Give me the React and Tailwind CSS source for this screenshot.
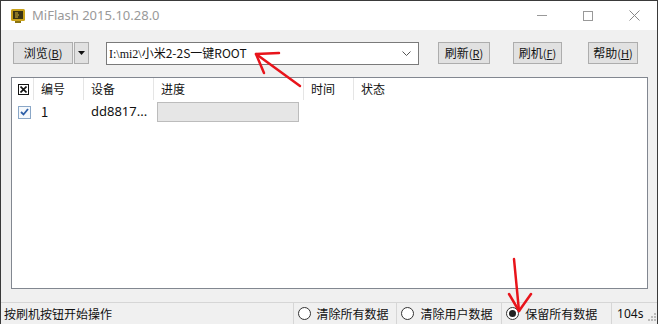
import React from "react";

const F = { fontFamily: '"Noto Sans CJK SC", "Noto Sans", sans-serif' };

function Btn({ children, className = "" }) {
  return (
    <div
      className={`h-[22px] flex items-center justify-center bg-[#e1e1e1] border border-[#adadad] text-[12px] text-[#111] leading-none ${className}`}
    >
      {children}
    </div>
  );
}

function Radio({ checked, label, w }) {
  return (
    <div className={`flex items-center gap-[6px] pl-[4px] border-l border-[#d6d6d6] h-full ${w}`}>
      <div className="w-[13px] h-[13px] rounded-full border border-[#333] bg-white flex items-center justify-center">
        {checked && <div className="w-[7px] h-[7px] rounded-full bg-[#222]" />}
      </div>
      <span className="text-[12px] text-[#111]">{label}</span>
    </div>
  );
}

export default function App() {
  return (
    <div
      style={F}
      className="relative w-[658px] h-[324px] overflow-hidden border-l border-r border-t border-[#3a3a3a] bg-[#f0f0f0] flex flex-col"
    >
      {/* title bar */}
      <div className="h-[29px] bg-white flex items-center shrink-0">
        <svg width="16" height="16" viewBox="0 0 16 16" className="ml-[9px]">
          <rect x="1" y="1" width="14" height="12" rx="1.5" fill="#c9a21a" />
          <rect x="3" y="3" width="10" height="8" fill="#3b3413" />
          <path d="M5 5 h3 M5 7 h4 M5 9 h3" stroke="#d9b634" strokeWidth="1" />
          <rect x="5" y="13" width="6" height="2" fill="#8a7412" />
        </svg>
        <span className="ml-[6px] text-[13px] text-[#999]" style={{ fontFamily: '"Noto Sans", sans-serif' }}>
          MiFlash 2015.10.28.0
        </span>
        <div className="ml-auto flex items-center h-full">
          <div className="w-[46px] flex justify-center">
            <div className="w-[10px] h-px bg-[#999]" />
          </div>
          <div className="w-[46px] flex justify-center">
            <div className="w-[10px] h-[10px] border border-[#999]" />
          </div>
          <div className="w-[46px] flex justify-center">
            <svg width="11" height="11" viewBox="0 0 11 11">
              <path d="M0.5 0.5 L10.5 10.5 M10.5 0.5 L0.5 10.5" stroke="#888" strokeWidth="1" />
            </svg>
          </div>
        </div>
      </div>

      {/* toolbar */}
      <div className="flex items-center mt-[12px] h-[22px] shrink-0">
        <Btn className="ml-[12px] w-[60px]">
          浏览<span className="text-[11px]">(<u>B</u>)</span>
        </Btn>
        <Btn className="ml-[1px] w-[15px]">
          <svg width="7" height="4" viewBox="0 0 7 4">
            <path d="M0 0 H7 L3.5 4 Z" fill="#111" />
          </svg>
        </Btn>
        <div className="ml-[17px] w-[313px] h-[23px] bg-white border border-[#7a7a7a] flex items-center">
          <span className="ml-[2px] text-[12px] text-[#111]">
            <span style={{ fontFamily: '"Liberation Serif", serif' }}>I:\mi2\</span>小米2-2S一键ROOT
          </span>
          <svg width="9" height="5" viewBox="0 0 9 5" className="ml-auto mr-[7px]">
            <path d="M0.5 0.5 L4.5 4.5 L8.5 0.5" stroke="#555" fill="none" strokeWidth="1" />
          </svg>
        </div>
        <Btn className="ml-[19px] w-[52px]">
          刷新<span className="text-[11px]">(<u>R</u>)</span>
        </Btn>
        <Btn className="ml-[23px] w-[49px]">
          刷机<span className="text-[11px]">(<u>F</u>)</span>
        </Btn>
        <Btn className="ml-[26px] w-[50px]">
          帮助<span className="text-[11px]">(<u>H</u>)</span>
        </Btn>
      </div>

      {/* list view */}
      <div className="mt-[13px] ml-[10px] w-[637px] h-[212px] bg-white border border-[#828790] shrink-0 flex flex-col">
        <div className="h-[22px] flex items-center text-[12px] text-[#111] shrink-0">
          <div className="w-[22px] h-full flex items-center justify-center border-r border-[#e5e5e5]">
            <div className="w-[11px] h-[11px] border border-[#111] flex items-center justify-center ml-[2px]">
              <svg width="7" height="7" viewBox="0 0 7 7">
                <path d="M0.5 0.5 L6.5 6.5 M6.5 0.5 L0.5 6.5" stroke="#111" strokeWidth="1.6" />
              </svg>
            </div>
          </div>
          <div className="w-[50px] h-full flex items-center pl-[7px] border-r border-[#e5e5e5]">编号</div>
          <div className="w-[70px] h-full flex items-center pl-[7px] border-r border-[#e5e5e5]">设备</div>
          <div className="w-[150px] h-full flex items-center pl-[7px] border-r border-[#e5e5e5]">进度</div>
          <div className="w-[50px] h-full flex items-center pl-[7px] border-r border-[#e5e5e5]">时间</div>
          <div className="h-full flex items-center pl-[7px]">状态</div>
        </div>
        <div className="h-[22px] flex items-center text-[13px] text-[#111] mt-[1px]">
          <div className="w-[22px] flex items-center justify-center">
            <div className="w-[13px] h-[13px] border border-[#8aa7c7] bg-[#f4f8fc] flex items-center justify-center ml-[2px]">
              <svg width="9" height="8" viewBox="0 0 9 8">
                <path d="M1 4 L3.5 6.5 L8 1" stroke="#2d5fa8" fill="none" strokeWidth="1.8" />
              </svg>
            </div>
          </div>
          <div className="w-[50px] pl-[7px]">1</div>
          <div className="w-[70px] pl-[7px]" style={{ fontFamily: '"Noto Sans", sans-serif' }}>dd8817...</div>
          <div className="w-[142px] h-[20px] ml-[3px] bg-[#e6e6e6] border border-[#bcbcbc]" />
        </div>
      </div>

      {/* status bar */}
      <div className="mt-auto h-[22px] border-t border-[#d6d6d6] flex items-center shrink-0">
        <div className="w-[292px] pl-[3px] text-[12px] text-[#111]">按刷机按钮开始操作</div>
        <Radio label="清除所有数据" w="w-[104px]" />
        <Radio label="清除用户数据" w="w-[105px]" />
        <Radio checked label="保留所有数据" w="w-[110px]" />
        <div className="flex items-center border-l border-[#d6d6d6] h-full pl-[5px] w-[36px] text-[12px] text-[#111]" style={{ fontFamily: '"Noto Sans", sans-serif' }}>
          104s
        </div>
        <svg width="9" height="9" viewBox="0 0 9 9" className="self-end mb-[2px] ml-[1px]">
          <rect x="6" y="0" width="2" height="2" fill="#bbb" />
          <rect x="3" y="3" width="2" height="2" fill="#bbb" />
          <rect x="6" y="3" width="2" height="2" fill="#bbb" />
          <rect x="0" y="6" width="2" height="2" fill="#bbb" />
          <rect x="3" y="6" width="2" height="2" fill="#bbb" />
          <rect x="6" y="6" width="2" height="2" fill="#bbb" />
        </svg>
      </div>

      {/* red annotation arrows */}
      <svg className="absolute left-0 top-0 pointer-events-none" width="658" height="324" viewBox="0 0 658 324">
        <g stroke="#e8141b" strokeWidth="2.5" fill="none" strokeLinecap="round" strokeLinejoin="round">
          <path d="M299 85 L255 53" />
          <path d="M278 52 L255 53 L263 72" />
          <path d="M513 258 L518 310" />
          <path d="M508 293 L518 310 L530 293" />
        </g>
      </svg>
    </div>
  );
}
